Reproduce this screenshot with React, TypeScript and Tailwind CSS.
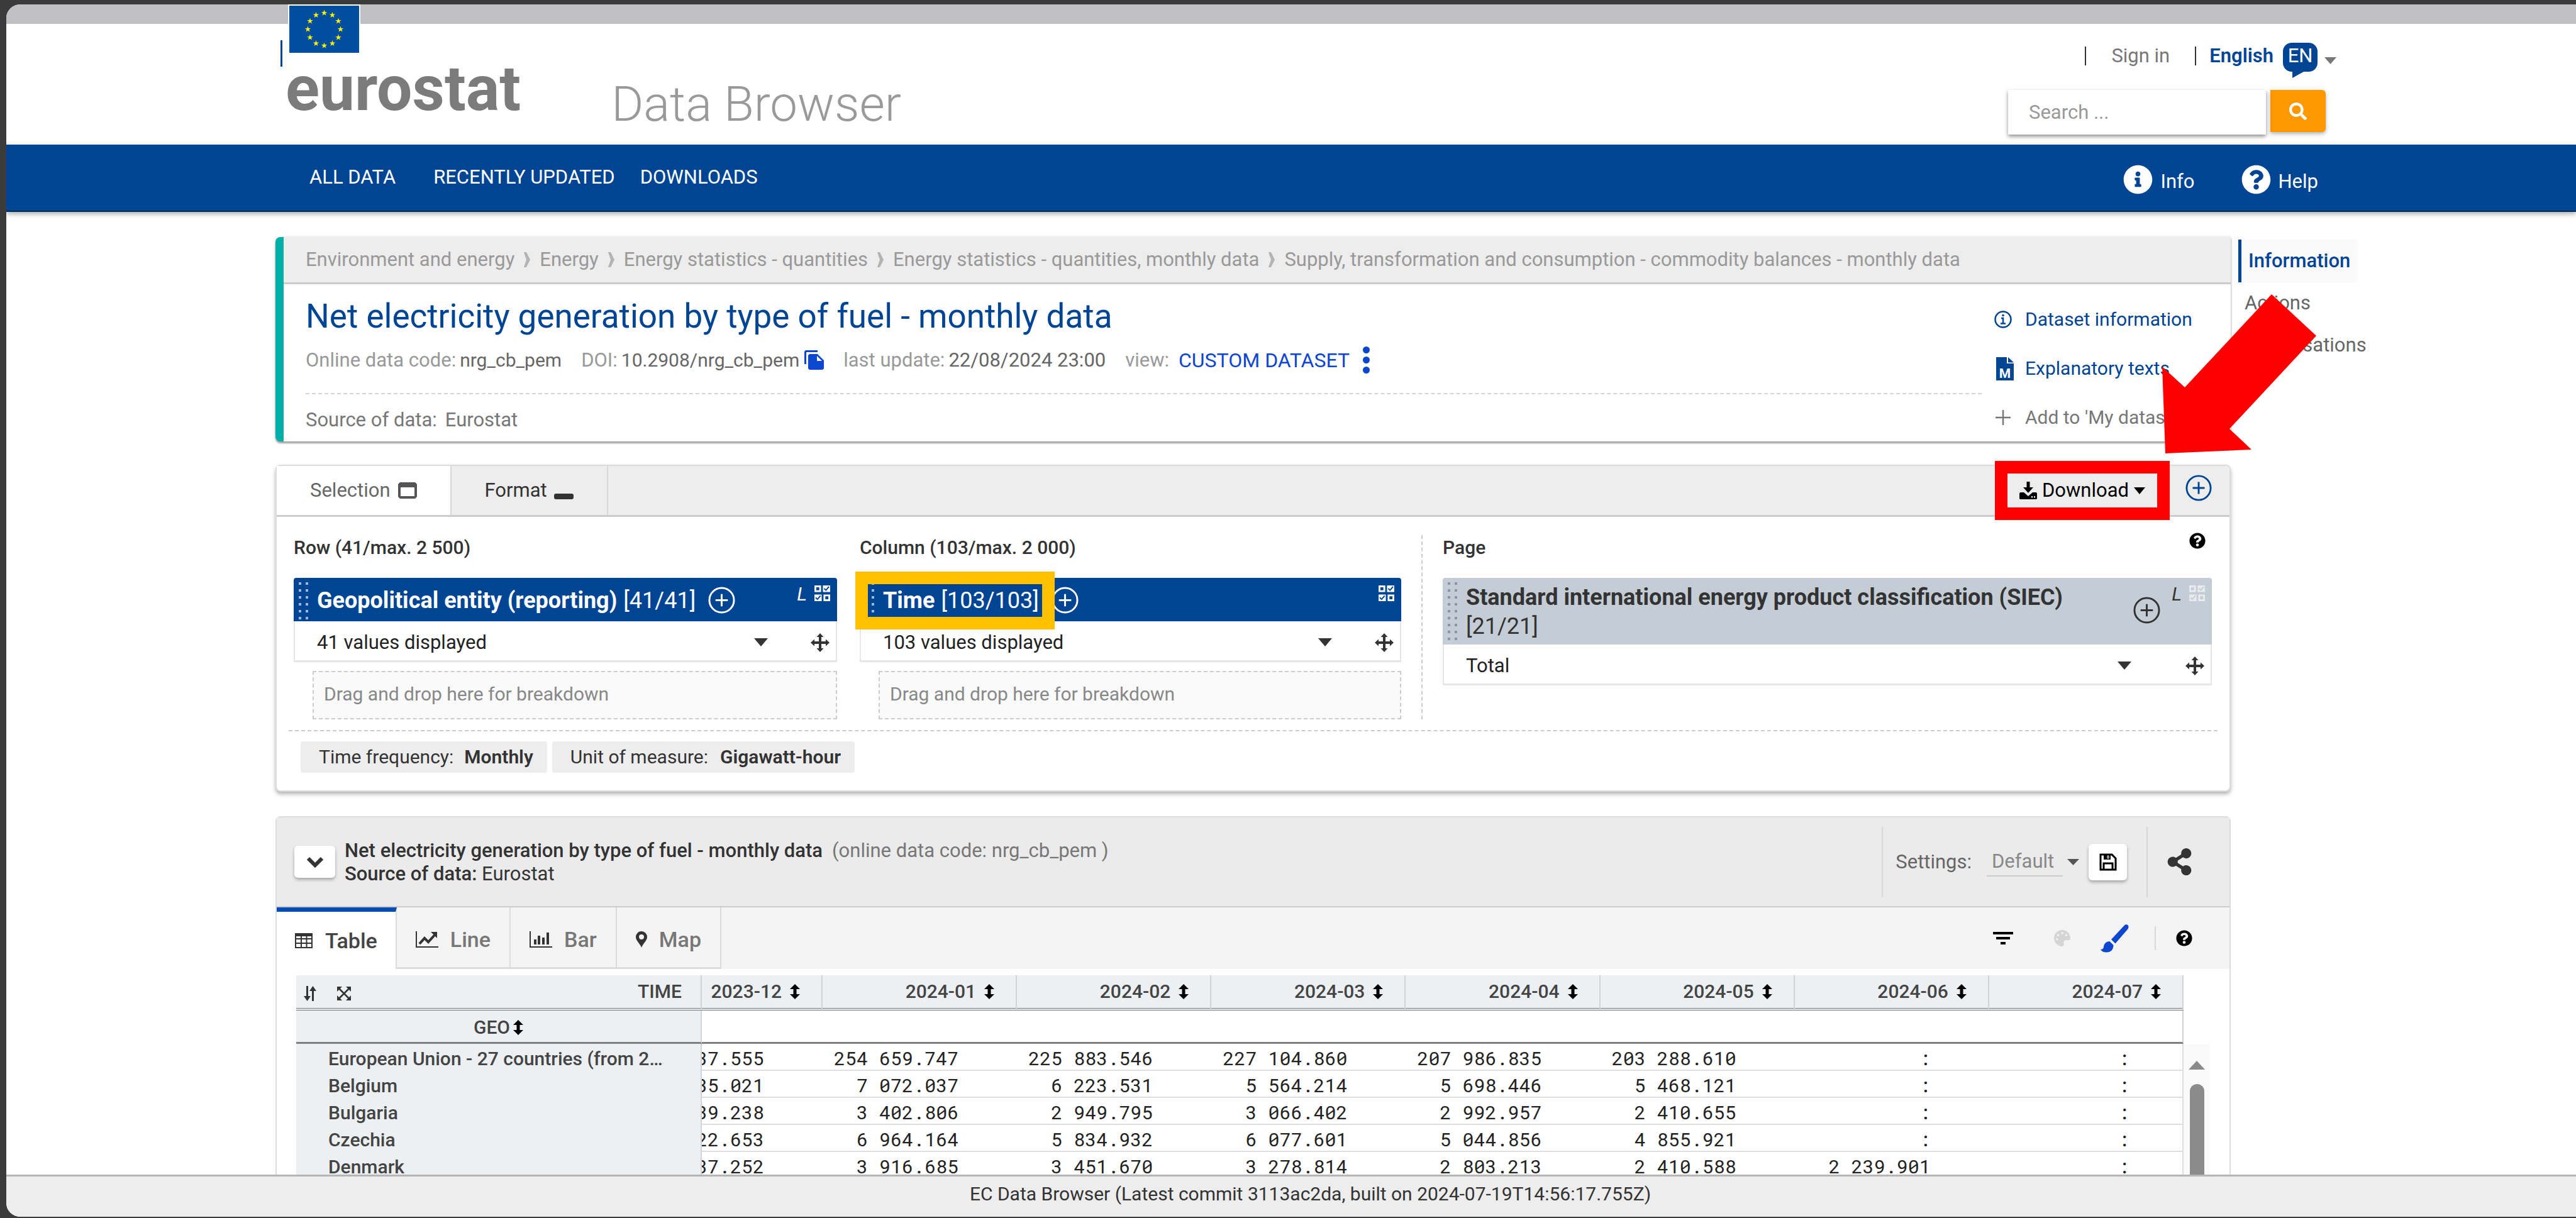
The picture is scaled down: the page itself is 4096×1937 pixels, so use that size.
import type { ReactNode } from "react";
import { FaInfoCircle, FaPalette, FaQuestionCircle, FaSearch, FaShareAlt } from "react-icons/fa";

const months = ["2023-12", "2024-01", "2024-02", "2024-03", "2024-04", "2024-05", "2024-06", "2024-07"];

const rows: { geo: string; values: string[] }[] = [
  { geo: "European Union - 27 countries (from 2…", values: ["37.555", "254 659.747", "225 883.546", "227 104.860", "207 986.835", "203 288.610", ":", ":"] },
  { geo: "Belgium", values: ["35.021", "7 072.037", "6 223.531", "5 564.214", "5 698.446", "5 468.121", ":", ":"] },
  { geo: "Bulgaria", values: ["39.238", "3 402.806", "2 949.795", "3 066.402", "2 992.957", "2 410.655", ":", ":"] },
  { geo: "Czechia", values: ["22.653", "6 964.164", "5 834.932", "6 077.601", "5 044.856", "4 855.921", ":", ":"] },
  { geo: "Denmark", values: ["37.252", "3 916.685", "3 451.670", "3 278.814", "2 803.213", "2 410.588", "2 239.901", ":"] },
];

const crumbs = [
  "Environment and energy",
  "Energy",
  "Energy statistics - quantities",
  "Energy statistics - quantities, monthly data",
  "Supply, transformation and consumption - commodity balances - monthly data",
];

function Caret({ className }: { className: string }) {
  return (
    <svg viewBox="0 0 20 12" className={className} fill="currentColor" preserveAspectRatio="none" aria-hidden="true">
      <path d="M0 0h20L10 12z" />
    </svg>
  );
}

function EuFlag() {
  const stars = Array.from({ length: 12 }, (_, i) => {
    const a = (i * Math.PI) / 6;
    return { x: 55.5 + 26 * Math.sin(a), y: 37.5 - 26 * Math.cos(a) };
  });
  return (
    <svg viewBox="0 0 111 75" className="h-[75px] w-[111px]" aria-hidden="true">
      <rect width="111" height="75" fill="#004f9f" />
      {stars.map((s, i) => (
        <path
          key={i}
          fill="#fdf200"
          transform={`translate(${s.x} ${s.y})`}
          d="M0-5 1.2-1.6 4.8-1.6 1.9.6 3 4 0 1.9-3 4-1.9.6-4.8-1.6-1.2-1.6z"
        />
      ))}
    </svg>
  );
}

function CirclePlus({ className }: { className: string }) {
  return (
    <svg viewBox="0 0 44 44" className={className} fill="none" stroke="currentColor" strokeWidth="3" aria-hidden="true">
      <circle cx="22" cy="22" r="20" />
      <path d="M22 12v20M12 22h20" />
    </svg>
  );
}

function CheckGrid({ className }: { className: string }) {
  return (
    <svg viewBox="0 0 26 26" className={className} fill="none" stroke="currentColor" strokeWidth="3" aria-hidden="true">
      <path d="M1.5 1.5h8v8h-8z" />
      <path d="M16.5 16.5h8v8h-8z" />
      <path d="M14 0h12v11H14zM0 15h12v11H0z" fill="currentColor" stroke="none" />
      <path d="M16 5l3 3 5-6M2 20l3 3 5-6" stroke="var(--tick)" strokeWidth="2" />
    </svg>
  );
}

function SortIcon() {
  return (
    <svg viewBox="0 0 16 24" className="h-[24px] w-[16px] text-black" fill="currentColor" aria-hidden="true">
      <path d="M8 0l8 8h-5.500v8H16l-8 8-8-8h5.500V8H0z" />
    </svg>
  );
}

function MoveIcon() {
  return (
    <svg viewBox="0 0 30 30" className="size-[30px]" fill="currentColor" aria-hidden="true">
      <path d="M15 0l5.500 6H17v7h7V9.500l6 5.500-6 5.500V17h-7v7h3.500L15 30l-5.500-6H13v-7H6v3.500L0 15l6-5.500V13h7V6H9.500z" />
    </svg>
  );
}

function BrushIcon() {
  return (
    <svg viewBox="0 0 45 45" className="size-[45px]" fill="currentColor" aria-hidden="true">
      <path d="M38 1.500c2.500-2.500 6.500-1 6.500 2.500 0 1.500-.6 2.600-1.500 4L23.500 30.500l-6.500-6.500z" />
      <path d="M14.500 27l6 6c0 7-4 11.500-11 11.500-4.500 0-7.500-1.500-9.500-4.500 3 0 4.500-1 5-4.500C5.600 30.500 9 27.500 14.500 27z" />
    </svg>
  );
}

function DownloadIcon() {
  return (
    <svg viewBox="0 0 28 28" className="h-[28px] w-[28px]" fill="currentColor" aria-hidden="true">
      <path d="M11.500 0h5v9H22l-8 9-8-9h5.500z" />
      <path d="M1 17h6l7 6 7-6h6l1 2v8l-1 1H1l-1-1v-8zM19 23v2.500h2V23zm4 0v2.500h2V23z" fillRule="evenodd" />
    </svg>
  );
}

function DotGrip({ rows: n, dark }: { rows: number; dark?: boolean }) {
  return (
    <span className="flex w-[16px] flex-col gap-[7px] overflow-hidden self-stretch" aria-hidden="true">
      {Array.from({ length: n }, (_, i) => (
        <span key={i} className="flex shrink-0 gap-[7px]">
          <span className={dark ? "size-[4px] bg-[#8b969d]" : "size-[4px] bg-[#9db9d9]"} />
          <span className={dark ? "size-[4px] bg-[#8b969d]" : "size-[4px] bg-[#9db9d9]"} />
        </span>
      ))}
    </span>
  );
}

function ValueSelect({ id, label, value, wide }: { id: string; label: string; value: string; wide?: boolean }) {
  return (
    <div className="flex h-[65px] items-center border-x-2 border-b-3 border-[#e6e6e6] bg-white pt-[5px] pr-[10px] pl-[35px]">
      <div className="relative flex flex-1 items-center">
        <select id={id} aria-label={label} className="w-full appearance-none bg-transparent text-[31px] leading-[40px] text-[#222]">
          <option>{value}</option>
        </select>
        <Caret
          className={
            wide
              ? "pointer-events-none absolute right-[86px] h-[13px] w-[22px] text-[#333]"
              : "pointer-events-none absolute right-[68px] h-[13px] w-[22px] text-[#333]"
          }
        />
      </div>
      <button type="button" aria-label="Move dimension" className="text-[#333]">
        <MoveIcon />
      </button>
    </div>
  );
}

function DropZone() {
  return (
    <div className="mt-[14px] ml-[30px] flex h-[77px] items-center border-2 border-dashed border-[#ccc] bg-[#fafafa] pb-[4px] pl-[16px] text-[30px] leading-[40px] text-[#888]">
      Drag and drop here for breakdown
    </div>
  );
}

function Meta({ label, children }: { label: string; children: ReactNode }) {
  return (
    <span className="flex items-center gap-[6px] text-[#999]">
      {label} {children}
    </span>
  );
}

function Header() {
  return (
    <header className="relative flex h-[192px] shrink-0 items-start justify-between pr-[381px] pl-[436px]">
      <div className="flex items-end">
        <a href="#home" aria-label="Eurostat home" className="-mt-[31px] flex flex-col">
          <span className="flex items-end">
            <span className="mb-[-20px] h-[42px] w-[3px] bg-[#004494]" />
            <span className="ml-[9px] border-2 border-white">
              <EuFlag />
            </span>
          </span>
          <span className="mt-[5px] ml-[8px] text-[100px] leading-[100px] font-bold text-[#7b7b7b]">eurostat</span>
        </a>
        <h1 className="mb-[-15px] ml-[144px] text-[78px] leading-[80px] font-light text-[#999]">Data Browser</h1>
      </div>
      <div className="flex flex-col items-end pt-[30px]">
        <div className="flex h-[56px] items-start text-[31px] leading-[42px] text-[#777]">
          <span className="mt-[6px] h-[30px] w-[2px] bg-[#333]" />
          <a href="#sign-in" className="ml-[40px]">
            Sign in
          </a>
          <span className="mt-[6px] ml-[40px] h-[30px] w-[2px] bg-[#333]" />
          <button type="button" className="ml-[21px] flex items-start font-semibold text-[#004494]">
            English
            <span className="relative ml-[15px] h-[56px] w-[55px] text-center font-normal text-white">
              <svg viewBox="0 0 55 56" className="absolute inset-0 size-full" fill="#004494" aria-hidden="true">
                <path d="M14 0h27a14 14 0 0 1 14 14v18a14 14 0 0 1-14 14h-8L15 56V46h-1A14 14 0 0 1 0 32V14A14 14 0 0 1 14 0z" />
              </svg>
              <span className="relative">EN</span>
            </span>
            <Caret className="mt-[23px] ml-[11px] h-[11px] w-[19px] text-[#777]" />
          </button>
        </div>
        <form className="mt-[19px] mr-[17px] flex items-start gap-[7px]">
          <input
            type="search"
            aria-label="Search"
            placeholder="Search ..."
            className="h-[71px] w-[410px] bg-white px-[33px] text-[31px] text-[#555] shadow-[0_3px_6px_rgba(0,0,0,0.45)] placeholder:text-[#999]"
          />
          <button type="button" aria-label="Run search" className="flex h-[67px] w-[88px] items-center justify-center rounded-r-[6px] bg-[#ff9800] text-white shadow-[0_3px_6px_rgba(0,0,0,0.3)]">
            <FaSearch className="size-[28px]" />
          </button>
        </form>
      </div>
    </header>
  );
}

function NavBar() {
  return (
    <nav className="relative z-10 flex h-[107px] shrink-0 items-center justify-between border-b-2 border-[#00295a] bg-[#004494] pr-[410px] pl-[482px] text-[31px] leading-[40px] text-white shadow-[0_3px_8px_rgba(0,0,0,0.35)]">
      <div className="flex pb-[2px]">
        <a href="#all">ALL DATA</a>
        <a href="#recent" className="ml-[60px]">
          RECENTLY UPDATED
        </a>
        <a href="#downloads" className="ml-[40px]">
          DOWNLOADS
        </a>
      </div>
      <div className="flex gap-[74px] pt-[6px]">
        <a href="#info" className="flex items-center gap-[12px]">
          <FaInfoCircle className="size-[47px]" />
          <span className="pt-[7px]">Info</span>
        </a>
        <a href="#help" className="flex items-center gap-[12px]">
          <FaQuestionCircle className="size-[47px]" />
          <span className="pt-[7px]">Help</span>
        </a>
      </div>
    </nav>
  );
}

function DatasetCard() {
  return (
    <section className="rounded-l-[8px] border-l-13 border-[#00b0a8] bg-white shadow-[0_3px_3px_rgba(0,0,0,0.35),0_0_4px_rgba(0,0,0,0.15)]">
      <ol className="flex h-[75px] items-center border-b-3 border-[#ccc] bg-[#ededed] pl-[35px] text-[31px] leading-[40px] text-[#999]">
        {crumbs.map((c, i) => (
          <li key={c} className="flex items-center">
            {i > 0 && (
              <svg viewBox="0 0 10 24" className="mx-[15px] h-[24px] w-[10px]" fill="#b3b3b3" aria-hidden="true">
                <path d="M0 0h4l6 12-6 12H0l4-12z" />
              </svg>
            )}
            <a href="#theme">{c}</a>
          </li>
        ))}
      </ol>
      <div className="flex gap-[20px] pl-[35px]">
        <div className="flex-1 pt-[21px] pb-[14px]">
          <h2 className="text-[53px] leading-[60px] text-[#004494]">Net electricity generation by type of fuel - monthly data</h2>
          <div className="mt-[18px] flex items-center gap-[31px] text-[31px] leading-[40px]">
            <Meta label="Online data code:">
              <span className="text-[30px] text-[#666]">nrg_cb_pem</span>
            </Meta>
            <Meta label="DOI:">
              <span className="text-[30px] text-[#666]">10.2908/nrg_cb_pem</span>
              <button type="button" aria-label="Copy DOI" className="ml-[2px] text-[#0d47cf]">
                <svg viewBox="0 0 31 31" className="size-[31px]" fill="currentColor" aria-hidden="true">
                  <path d="M2 0h19v3H3v19H0V2z" />
                  <path d="M8 6h13l10 10v13l-2 2H8l-2-2V8zm12 3v8h8z" fillRule="evenodd" />
                </svg>
              </button>
            </Meta>
            <Meta label="last update:">
              <span className="text-[31px] text-[#666]">22/08/2024 23:00</span>
            </Meta>
            <Meta label="view:">
              <a href="#view" className="ml-[9px] text-[32px] text-[#0d47cf]">
                CUSTOM DATASET
              </a>
              <button type="button" aria-label="View options" className="ml-[15px] flex flex-col gap-[5px]">
                <span className="size-[11px] rounded-full bg-[#0d47cf]" />
                <span className="size-[11px] rounded-full bg-[#0d47cf]" />
                <span className="size-[11px] rounded-full bg-[#0d47cf]" />
              </button>
            </Meta>
          </div>
          <div className="mt-[31px] border-t-2 border-dashed border-[#d5d5d5]" />
          <p className="mt-[21px] text-[31px] leading-[40px] text-[#777]">
            Source of data:<span className="ml-[13px]">Eurostat</span>
          </p>
        </div>
        <div className="flex w-[376px] flex-col gap-[38px] pt-[36px] text-[30px] leading-[40px] whitespace-nowrap text-[#004494]">
          <a href="#info" className="flex items-center">
            <svg viewBox="0 0 28 28" className="mr-[21px] size-[28px]" fill="none" stroke="currentColor" strokeWidth="2.500" aria-hidden="true">
              <circle cx="14" cy="14" r="12.500" />
              <path d="M11 12h3v8M10 20.500h8" />
              <circle cx="14" cy="7.500" r="1.800" fill="currentColor" stroke="none" />
            </svg>
            Dataset information
          </a>
          <a href="#texts" className="flex items-center">
            <svg viewBox="0 0 28 37" className="mr-[18px] ml-[3px] h-[37px] w-[28px]" fill="currentColor" aria-hidden="true">
              <path d="M0 0h17v10h11v27H0zM19 0l9 8.500h-9z" />
              <text x="14" y="33" textAnchor="middle" fontSize="21" fontWeight="700" fill="#fff">
                M
              </text>
            </svg>
            Explanatory texts
          </a>
          <button type="button" className="flex items-center text-[#777]">
            <svg viewBox="0 0 24 24" className="mr-[23px] ml-[2px] size-[24px]" fill="none" stroke="currentColor" strokeWidth="2.500" aria-hidden="true">
              <path d="M12 0v24M0 12h24" />
            </svg>
            Add to 'My datasets'
          </button>
        </div>
      </div>
    </section>
  );
}

function DimensionHeader({ name, count }: { name: string; count: string }) {
  return (
    <div className="flex h-[69px] rounded-t-[4px] bg-[#004494] pt-[7px] pr-[11px] pl-[8px] text-white [--tick:#004494]">
      <DotGrip rows={6} />
      <div className="ml-[13px] flex flex-1 items-center pb-[5px] text-[36px] leading-[46px]">
        <b className="font-bold">{name}</b>
        <span className="ml-[10px]">{count}</span>
        <button type="button" aria-label={`Add ${name} values`} className="ml-[20px]">
          <CirclePlus className="size-[43px]" />
        </button>
      </div>
      {name !== "Time" && <i className="mt-[4px] mr-[12px] text-[30px] leading-[30px]">L</i>}
      <CheckGrid className="mt-[5px] size-[25px]" />
    </div>
  );
}

function SelectionCard() {
  return (
    <section className="mt-[37px] rounded-[8px] border-2 border-[#dcdcdc] bg-white shadow-[0_4px_6px_rgba(0,0,0,0.3)]">
      <div className="flex h-[81px] items-stretch rounded-t-[8px] border-b-3 border-[#ccc] bg-[#ededed] text-[31px] leading-[40px]">
        <button type="button" className="flex items-center gap-[12px] border-r-2 border-[#d9d9d9] bg-white px-[53px] text-[#666]">
          Selection
          <svg viewBox="0 0 30 26" className="h-[26px] w-[30px]" aria-hidden="true">
            <path d="M3 0h24l3 3v20l-3 3H3l-3-3V3zM4 8v14h22V8z" fill="#555" fillRule="evenodd" />
          </svg>
        </button>
        <button type="button" className="flex items-center border-r-2 border-[#d9d9d9] px-[53px] text-[#333]">
          Format
          <span className="mt-[18px] ml-[11px] h-[9px] w-[31px] rounded-[3px] bg-[#333]" />
        </button>
        <div className="ml-auto flex items-center pr-[28px]">
          <div className="relative flex h-[54px] w-[238px] items-center justify-center">
            <button type="button" className="flex items-center text-black">
              <DownloadIcon />
              <span className="ml-[8px]">Download</span>
              <Caret className="ml-[8px] h-[11px] w-[18px]" />
            </button>
            <div className="pointer-events-none absolute -inset-[20px] border-20 border-[#ff0000]" />
            <svg viewBox="0 0 246 253" className="pointer-events-none absolute bottom-[86px] left-[246px] z-20 h-[253px] w-[246px] max-w-none" fill="#ff0000" aria-hidden="true">
              <path d="M174 0l71 66-138 148 35 33L5 253 0 115l36 33z" />
            </svg>
          </div>
          <button type="button" aria-label="Add" className="mb-[8px] ml-[45px] text-[#004494]">
            <CirclePlus className="size-[42px]" />
          </button>
        </div>
      </div>

      <div className="grid grid-cols-[864fr_861fr_1253fr] gap-[36px] pt-[29px] pr-[28px] pl-[27px]">
        <div>
          <h3 className="mb-[28px] text-[30px] leading-[40px] font-medium text-[#333]">Row (41/max. 2 500)</h3>
          <DimensionHeader name="Geopolitical entity (reporting)" count="[41/41]" />
          <ValueSelect id="geo" label="Geopolitical entity values" value="41 values displayed" />
          <DropZone />
        </div>
        <div>
          <h3 className="mb-[28px] text-[30px] leading-[40px] font-medium text-[#333]">Column (103/max. 2 000)</h3>
          <div className="relative">
            <DimensionHeader name="Time" count="[103/103]" />
            <div className="pointer-events-none absolute -top-[10px] -left-[7px] h-[92px] w-[317px] border-20 border-[#ffc000]" />
          </div>
          <ValueSelect id="time" label="Time values" value="103 values displayed" />
          <DropZone />
        </div>
        <div className="-ml-[4px] border-l-2 border-dashed border-[#ccc] pl-[32px]">
          <div className="flex items-start justify-between pr-[10px]">
            <h3 className="mb-[28px] text-[30px] leading-[40px] font-medium text-[#333]">Page</h3>
            <button type="button" aria-label="Help on dimensions" className="-mt-[4px] text-black">
              <FaQuestionCircle className="size-[26px]" />
            </button>
          </div>
          <div className="flex rounded-t-[4px] bg-[#c4cdd5] pt-[7px] pr-[11px] pl-[8px] text-[#333] [--tick:#c4cdd5]">
            <DotGrip rows={9} dark />
            <div className="ml-[13px] flex-1 pt-[1px] pb-[6px] text-[36px] leading-[46px]">
              <b className="font-bold">Standard international energy product classification (SIEC)</b>
              <br />
              [21/21]
            </div>
            <button type="button" aria-label="Add product values" className="mr-[18px] mb-[10px] self-center">
              <CirclePlus className="size-[43px]" />
            </button>
            <i className="mt-[4px] mr-[12px] text-[30px] leading-[30px]">L</i>
            <CheckGrid className="mt-[5px] size-[25px] text-[#e8ecef]" />
          </div>
          <ValueSelect id="siec" label="Energy product values" value="Total" wide />
        </div>
      </div>

      <div className="mx-[19px] mt-[17px] border-t-2 border-dashed border-[#ccc]" />
      <div className="mt-[16px] mb-[28px] ml-[38px] flex gap-[8px] text-[30px] leading-[40px] text-[#333]">
        <div className="flex h-[50px] items-center rounded-[4px] bg-[#ededed] pr-[22px] pl-[29px]">
          Time frequency:<b className="ml-[17px] font-semibold">Monthly</b>
        </div>
        <div className="flex h-[50px] items-center rounded-[4px] bg-[#ededed] pr-[22px] pl-[29px]">
          Unit of measure:<b className="ml-[19px] font-semibold">Gigawatt-hour</b>
        </div>
      </div>
    </section>
  );
}

function ViewTab({ label, icon }: { label: string; icon: ReactNode }) {
  return (
    <button type="button" className="flex items-center gap-[19px] border-r-2 border-b-3 border-[#dcdcdc] px-[30px] pt-[6px] font-medium text-[#777]">
      <span className="text-[#333]">{icon}</span>
      {label}
    </button>
  );
}

function DataTable() {
  return (
    <div className="flex pt-[10px] pr-[31px] pl-[31px]">
      <div className="min-w-0 flex-1">
        <table className="w-full table-fixed border-separate border-spacing-0">
          <colgroup>
            <col className="w-[645px]" />
            <col className="w-[192px]" />
            {months.slice(1).map((m) => (
              <col key={m} />
            ))}
          </colgroup>
          <thead className="text-[30px] leading-[40px] font-medium text-[#444]">
            <tr className="h-[56px] bg-[#ecf0f3]">
              <th scope="col" className="border-r-2 border-b-4 border-double border-r-[#d0d4d7] border-b-[#777] px-[12px] font-medium">
                <span className="flex items-center">
                  <svg viewBox="0 0 20 24" className="mt-[6px] h-[24px] w-[20px]" fill="#333" aria-hidden="true">
                    <path d="M4 0h3v16h4l-5.500 8L0 16h4zM13 24h3V8h4l-5.500-8L9 8h4z" />
                  </svg>
                  <svg viewBox="0 0 22 22" className="mt-[6px] ml-[33px] size-[22px]" fill="#333" aria-hidden="true">
                    <path d="M0 0h8L0 8zM22 0v8l-8-8zM0 22v-8l8 8zM22 22h-8l8-8z" />
                    <path d="M3 3l16 16M19 3L3 19" stroke="#333" strokeWidth="2.500" />
                  </svg>
                  <span className="ml-auto pr-[18px]">TIME</span>
                </span>
              </th>
              {months.map((m) => (
                <th key={m} scope="col" className="border-r-2 border-b-4 border-double border-r-[#d0d4d7] border-b-[#777] pr-[34px] font-medium">
                  <span className="flex items-center justify-end gap-[13px]">
                    {m} <SortIcon />
                  </span>
                </th>
              ))}
            </tr>
            <tr className="h-[53px]">
              <th scope="col" className="border-r-2 border-b-3 border-r-[#d0d4d7] border-b-[#808080] bg-[#ecf0f3] pt-[4px] font-medium">
                <span className="flex items-center justify-center gap-[5px]">
                  GEO <SortIcon />
                </span>
              </th>
              <td colSpan={8} className="border-r-2 border-b-3 border-r-[#d0d4d7] border-b-[#808080]" />
            </tr>
          </thead>
          <tbody className="text-[30px] leading-[36px]">
            {rows.map((r) => (
              <tr key={r.geo} className="h-[43px]">
                <th scope="row" className="border-r-2 border-[#d0d4d7] bg-[#ecf0f3] pt-[5px] pl-[51px] text-left font-medium whitespace-nowrap text-[#444]">
                  {r.geo}
                </th>
                {r.values.map((v, i) => (
                  <td
                    key={i}
                    className={
                      i === 7
                        ? "border-r-2 border-b-2 border-[#dedede] pt-[5px] pr-[84px] text-right font-['Roboto_Mono','Liberation_Mono',monospace] whitespace-nowrap text-[#222]"
                        : "border-b-2 border-[#dedede] pt-[5px] pr-[93px] text-right font-['Roboto_Mono','Liberation_Mono',monospace] whitespace-nowrap text-[#222]"
                    }
                  >
                    {i === 0 ? <span className="flex justify-end overflow-hidden">{v}</span> : v}
                  </td>
                ))}
              </tr>
            ))}
          </tbody>
        </table>
      </div>
      <div className="mt-[110px] flex w-[42px] flex-col items-center bg-[#fafafa] pt-[26px]" aria-hidden="true">
        <svg viewBox="0 0 26 14" className="h-[14px] w-[26px]" fill="#8b8b8b">
          <path d="M13 0l13 14H0z" />
        </svg>
        <span className="mt-[23px] w-[23px] flex-1 rounded-t-full bg-[#8b8b8b]" />
      </div>
    </div>
  );
}

function TableCard() {
  return (
    <section className="mt-[39px] rounded-t-[8px] border-2 border-[#dcdcdc] bg-white">
      <div className="flex h-[143px] items-center border-b-2 border-[#ccc] bg-[#ebebeb] pr-[58px] pl-[28px] text-[31px] leading-[37px]">
        <button type="button" aria-label="Collapse" className="flex h-[51px] w-[65px] items-center justify-center rounded-[6px] bg-white shadow-[0_3px_5px_rgba(0,0,0,0.3)]">
          <svg viewBox="0 0 26 18" className="h-[18px] w-[26px]" fill="none" stroke="#333" strokeWidth="6" aria-hidden="true">
            <path d="M2 3l11 11L24 3" />
          </svg>
        </button>
        <div className="ml-[15px] flex-1 text-[#333]">
          <p>
            <b className="font-medium">Net electricity generation by type of fuel - monthly data</b>
            <span className="ml-[15px] text-[#777]">(online data code: nrg_cb_pem )</span>
          </p>
          <p>
            <b className="font-medium">Source of data:</b> Eurostat
          </p>
        </div>
        <div className="flex h-[112px] items-center border-l-2 border-[#d8d8d8] pl-[20px] text-[#666]">
          <label htmlFor="settings">Settings:</label>
          <select id="settings" className="ml-[24px] w-[121px] appearance-none border-b-2 border-[#ccc] pt-[4px] pb-[4px] pl-[8px] text-[#888]">
            <option>Default</option>
          </select>
          <Caret className="ml-[7px] h-[10px] w-[19px] text-[#555]" />
          <button type="button" aria-label="Save settings" className="ml-[15px] flex h-[58px] w-[61px] items-center justify-center rounded-[6px] bg-white text-black shadow-[0_3px_5px_rgba(0,0,0,0.3)]">
            <svg viewBox="0 0 28 28" className="size-[28px]" fill="none" stroke="currentColor" strokeWidth="3" aria-hidden="true">
              <path d="M2 2h18l6 6v18H2zM7 25V16h14v9" />
              <path d="M7 2h11v8H7z" fill="currentColor" stroke="none" />
              <path d="M13 4h2v4h-2z" stroke="#fff" strokeWidth="1" />
            </svg>
          </button>
        </div>
        <div className="ml-[31px] flex h-[112px] items-center border-l-2 border-[#d8d8d8] pl-[29px]">
          <button type="button" aria-label="Share" className="text-[#333]">
            <FaShareAlt className="size-[43px]" />
          </button>
        </div>
      </div>

      <div className="flex h-[98px] items-stretch bg-[#f4f4f4] text-[34px] leading-[40px]">
        <button type="button" className="flex items-center gap-[20px] border-t-7 border-r-2 border-t-[#004fb0] border-r-[#dcdcdc] bg-white px-[29px] font-medium text-[#444]">
          <svg viewBox="0 0 28 24" className="h-[24px] w-[28px]" fill="none" stroke="#333" strokeWidth="2" aria-hidden="true">
            <path d="M1 1h26v22H1zM1 9h26M1 16h26M10 4v19M18.500 4v19" />
            <path d="M1 2.500h26" strokeWidth="5" />
          </svg>
          Table
        </button>
        <ViewTab
          label="Line"
          icon={
            <svg viewBox="0 0 36 26" className="h-[26px] w-[36px]" fill="none" stroke="currentColor" aria-hidden="true">
              <path d="M1 0v25h35" strokeWidth="2" />
              <path d="M6 20l8-9 6 6L31 5" strokeWidth="4" />
              <path d="M24 1h10v10z" fill="currentColor" stroke="none" />
            </svg>
          }
        />
        <ViewTab
          label="Bar"
          icon={
            <svg viewBox="0 0 36 26" className="h-[26px] w-[36px]" fill="currentColor" aria-hidden="true">
              <path d="M0 0h2v24h34v2H0zM7 13h4v8H7zM13 7h4v14h-4zM20 10h4v11h-4zM27 2h4v19h-4z" />
            </svg>
          }
        />
        <ViewTab
          label="Map"
          icon={
            <svg viewBox="0 0 18 26" className="h-[26px] w-[18px]" fill="currentColor" aria-hidden="true">
              <path d="M9 0a9 9 0 0 1 9 9c0 6-7 11-9 17C7 20 0 15 0 9a9 9 0 0 1 9-9zm0 5a4 4 0 1 0 0 8 4 4 0 0 0 0-8z" fillRule="evenodd" />
            </svg>
          }
        />
        <div className="ml-auto flex items-center pr-[59px]">
          <button type="button" aria-label="Filter" className="text-black">
            <svg viewBox="0 0 32 20" className="h-[20px] w-[32px]" fill="currentColor" aria-hidden="true">
              <path d="M0 0h32v4H0zM5 8h22v4H5zM12 16h8v4h-8z" />
            </svg>
          </button>
          <button type="button" aria-label="Palette" className="ml-[65px] text-[#d5d5d5]">
            <FaPalette className="size-[26px]" />
          </button>
          <button type="button" aria-label="Format cells" className="ml-[48px] text-[#0d47cf]">
            <BrushIcon />
          </button>
          <span className="ml-[41px] h-[38px] w-[2px] bg-[#d8d8d8]" />
          <button type="button" aria-label="Help on table" className="ml-[32px] text-black">
            <FaQuestionCircle className="size-[26px]" />
          </button>
        </div>
      </div>
      <DataTable />
    </section>
  );
}

export default function App() {
  return (
    <div className="h-screen bg-[#3b3b3b] pt-[7px] pb-[2px] pl-[10px] font-['Roboto',sans-serif]">
      <div className="flex h-full flex-col overflow-hidden rounded-l-[22px] bg-white">
        <div className="h-[31px] shrink-0 bg-[#c0bfc4]" />
        <Header />
        <NavBar />
        <div className="flex min-h-0 flex-1 items-start overflow-hidden pt-[40px] pl-[428px]">
          <main className="min-w-0 flex-1">
            <DatasetCard />
            <SelectionCard />
            <TableCard />
          </main>
          <aside className="ml-[12px] flex w-[537px] shrink-0 flex-col items-start pt-[4px] text-[31px] leading-[40px] text-[#666]">
            <a href="#information" className="border-l-5 border-[#004494] bg-[#fafafa] py-[14px] pr-[12px] pl-[11px] font-medium text-[#004494]">
              Information
            </a>
            <a href="#actions" className="mt-[13px] ml-[10px]">
              Actions
            </a>
            <a href="#visualisations" className="mt-[27px] ml-[10px]">
              Visualisations
            </a>
          </aside>
        </div>
        <footer className="relative z-10 flex h-[67px] shrink-0 items-center justify-center border-t-3 border-[#b5b5b5] bg-[#ededed] pb-[8px] pl-[61px] text-[30px] leading-[40px] text-[#333]">
          EC Data Browser (Latest commit 3113ac2da, built on 2024-07-19T14:56:17.755Z)
        </footer>
      </div>
    </div>
  );
}
